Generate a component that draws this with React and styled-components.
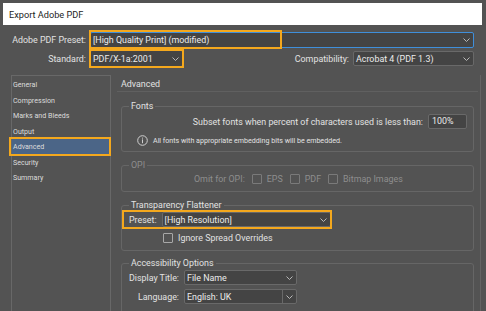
import React from 'react';
import styled, { createGlobalStyle } from 'styled-components';

const GlobalStyle = createGlobalStyle`
    html, body {
        margin: 0;
        padding: 0;
        background: #535353;
    }
    body {
        font-family: Roboto, "Noto Sans", sans-serif;
        font-size: 8.9px;
        color: #e2e2e2;
    }
`

function Chevron() {
    return (
        <svg width="7" height="4" viewBox="0 0 7 4">
            <polyline points="0.5,0.5 3.5,3.5 6.5,0.5" fill="none" stroke="#b8b8b8" strokeWidth="1" />
        </svg>
    )
}

function InfoIcon() {
    return (
        <svg width="11" height="11" viewBox="0 0 11 11">
            <circle cx="5.5" cy="5.5" r="4.8" fill="none" stroke="#cfcfcf" strokeWidth="1" />
            <rect x="5" y="2.6" width="1" height="1" fill="#cfcfcf" />
            <rect x="5" y="4.4" width="1" height="3.8" fill="#cfcfcf" />
        </svg>
    )
}

function Dropdown({ children, width, height, focus, split }) {
    return (
        <Select $width={width} $height={height} $focus={focus}>
            <SelectText>{children}</SelectText>
            <Arrow $split={split}><Chevron /></Arrow>
        </Select>
    )
}

function Check({ children, disabled }) {
    return (
        <CheckLabel $disabled={disabled}>
            <Box $disabled={disabled} />
            {children}
        </CheckLabel>
    )
}

const sections = ['General', 'Compression', 'Marks and Bleeds', 'Output', 'Advanced', 'Security', 'Summary']

function App() {
    return (
        <Window>
            <GlobalStyle />
            <TitleBar>Export Adobe PDF</TitleBar>

            <TopRow $top={7}>
                <FieldLabel $width={86}>Adobe PDF Preset:</FieldLabel>
                <Marked>
                    <Dropdown width={384} focus>[High Quality Print] (modified)</Dropdown>
                    <Mark $left={-1} $top={-2} $width={193} $height={19} />
                </Marked>
            </TopRow>
            <TopRow $top={2}>
                <FieldLabel $width={86}>Standard:</FieldLabel>
                <Marked>
                    <Dropdown width={93} height={17}>PDF/X-1a:2001</Dropdown>
                    <Mark $left={-1} $top={-1} $width={95} $height={19} />
                </Marked>
                <Spacer />
                <FieldLabel>Compatibility:</FieldLabel>
                <Dropdown width={121} height={15}>Acrobat 4 (PDF 1.3)</Dropdown>
            </TopRow>

            <Body>
                <Sidebar>
                    {sections.map(name => (
                        <NavItem key={name} $active={name === 'Advanced'}>
                            {name}
                            {name === 'Advanced' && <Mark $left={-3} $top={-2} $width={102} $height={19} />}
                        </NavItem>
                    ))}
                </Sidebar>

                <Content>
                    <Heading>Advanced</Heading>

                    <Group $gap={7} $bottom={5}>
                        <Legend>Fonts</Legend>
                        <Row $right $height={15} $space={1}>
                            <span>Subset fonts when percent of characters used is less than:</span>
                            <Input>100%</Input>
                        </Row>
                        <InfoRow>
                            <InfoIcon />
                            <span>All fonts with appropriate embedding bits will be embedded.</span>
                        </InfoRow>
                    </Group>

                    <Group $gap={6} $bottom={5}>
                        <Legend $disabled>OPI</Legend>
                        <Row $indent={72} $height={14} $disabled>
                            <span>Omit for OPI:</span>
                            <Check disabled>EPS</Check>
                            <Check disabled>PDF</Check>
                            <Check disabled>Bitmap Images</Check>
                        </Row>
                    </Group>

                    <Group $gap={6} $bottom={6}>
                        <Legend>Transparency Flattener</Legend>
                        <Marked>
                            <Row $indent={7} $height={15}>
                                <span>Preset:</span>
                                <Dropdown width={169} height={15}>[High Resolution]</Dropdown>
                            </Row>
                            <Mark $left={0} $top={-2} $width={210} $height={19} />
                        </Marked>
                        <CheckRow>
                            <Check>Ignore Spread Overrides</Check>
                        </CheckRow>
                    </Group>

                    <Group $gap={5} $bottom={20}>
                        <Legend>Accessibility Options</Legend>
                        <Row $height={15}>
                            <FieldLabel $width={57}>Display Title:</FieldLabel>
                            <Dropdown width={113} height={15}>File Name</Dropdown>
                        </Row>
                        <Row $height={15} $space={4}>
                            <FieldLabel $width={57}>Language:</FieldLabel>
                            <Dropdown width={113} height={15} split>English: UK</Dropdown>
                        </Row>
                    </Group>
                </Content>
            </Body>
        </Window>
    )
}

export default App

const Window = styled.div`
    width: 486px;
    height: 311px;
    overflow: hidden;
    display: flex;
    flex-direction: column;
    box-sizing: border-box;
    padding-top: 3px;
    background: #535353;
`

const TitleBar = styled.div`
    flex: none;
    height: 22px;
    margin: 0 4px 0 3px;
    background: #fff;
    color: #1e1e1e;
    font-size: 9.2px;
    padding-left: 6px;
    display: flex;
    align-items: center;
`

const TopRow = styled.div`
    flex: none;
    display: flex;
    align-items: center;
    gap: 4px;
    margin-top: ${p => p.$top}px;
    padding-right: 12px;
`

const FieldLabel = styled.span`
    width: ${p => p.$width ? `${p.$width}px` : 'auto'};
    text-align: right;
    white-space: nowrap;
    flex: none;
`

const Spacer = styled.div`
    flex: 1;
`

const Marked = styled.div`
    position: relative;
`

const Mark = styled.div`
    position: absolute;
    left: ${p => p.$left}px;
    top: ${p => p.$top}px;
    width: ${p => p.$width}px;
    height: ${p => p.$height}px;
    border: 2px solid #f4a81d;
    box-sizing: border-box;
    pointer-events: none;
`

const Select = styled.div`
    width: ${p => p.$width}px;
    height: ${p => p.$height || 16}px;
    box-sizing: border-box;
    display: flex;
    align-items: center;
    background: #444;
    border: 1px solid ${p => p.$focus ? '#3f8fdb' : '#696969'};
    border-radius: 2px;
    color: #ececec;
`

const SelectText = styled.span`
    flex: 1;
    padding-left: 2px;
    white-space: nowrap;
    overflow: hidden;
`

const Arrow = styled.span`
    width: 13px;
    align-self: stretch;
    display: flex;
    align-items: center;
    justify-content: center;
    border-left: 1px solid ${p => p.$split ? '#696969' : 'transparent'};
`

const Body = styled.div`
    flex: 1;
    min-height: 0;
    display: flex;
    margin-top: 8px;
    border-right: 1px solid #646464;
    margin-right: 5px;
`

const Sidebar = styled.div`
    box-sizing: border-box;
    width: 100px;
    margin-left: 11px;
    border: 1px solid #686868;
    border-bottom: none;
    padding-top: 1px;
    font-size: 7.1px;
    color: #dcdcdc;
`

const NavItem = styled.div`
    position: relative;
    height: 15.5px;
    line-height: 15.5px;
    padding-left: 1px;
    background: ${p => p.$active ? '#4b6587' : 'transparent'};
`

const Content = styled.div`
    flex: 1;
    margin-left: 6px;
    display: flex;
    flex-direction: column;
`

const Heading = styled.div`
    flex: none;
    height: 16px;
    line-height: 18px;
    padding-left: 4px;
    border-bottom: 1px solid #606060;
    margin-right: 2px;
`

const Group = styled.fieldset`
    flex: none;
    margin: ${p => p.$gap}px 6px 0 4px;
    padding: 0 0 ${p => p.$bottom}px 0;
    border: 1px solid #666;
    border-radius: 3px;
    min-width: 0;
`

const Legend = styled.legend`
    margin-left: 7px;
    padding: 0 2px;
    line-height: 14px;
    color: ${p => p.$disabled ? '#8e8e8e' : '#e2e2e2'};
`

const Row = styled.div`
    display: flex;
    align-items: center;
    justify-content: ${p => p.$right ? 'flex-end' : 'flex-start'};
    gap: 5px;
    height: ${p => p.$height}px;
    margin-top: ${p => p.$space || 0}px;
    padding-left: ${p => p.$indent || 0}px;
    padding-right: ${p => p.$right ? 6 : 0}px;
    color: ${p => p.$disabled ? '#8e8e8e' : 'inherit'};
`

const Input = styled.div`
    width: 39px;
    height: 15px;
    box-sizing: border-box;
    background: #444;
    border: 1px solid #696969;
    border-radius: 2px;
    padding-left: 3px;
    line-height: 13px;
    color: #ececec;
`

const InfoRow = styled.div`
    display: flex;
    align-items: center;
    gap: 5px;
    height: 12px;
    margin-top: 5px;
    padding-left: 15px;
    font-size: 7.1px;
`

const CheckRow = styled.div`
    height: 13px;
    margin-top: 4px;
    padding-left: 41px;
    display: flex;
    align-items: center;
`

const CheckLabel = styled.span`
    display: inline-flex;
    align-items: center;
    gap: 5px;
    margin-left: ${p => p.$disabled ? 2 : 0}px;
    color: ${p => p.$disabled ? '#8e8e8e' : 'inherit'};
`

const Box = styled.span`
    width: 8px;
    height: 8px;
    border: 1px solid ${p => p.$disabled ? '#7a7a7a' : '#a8a8a8'};
    border-radius: 1px;
`
